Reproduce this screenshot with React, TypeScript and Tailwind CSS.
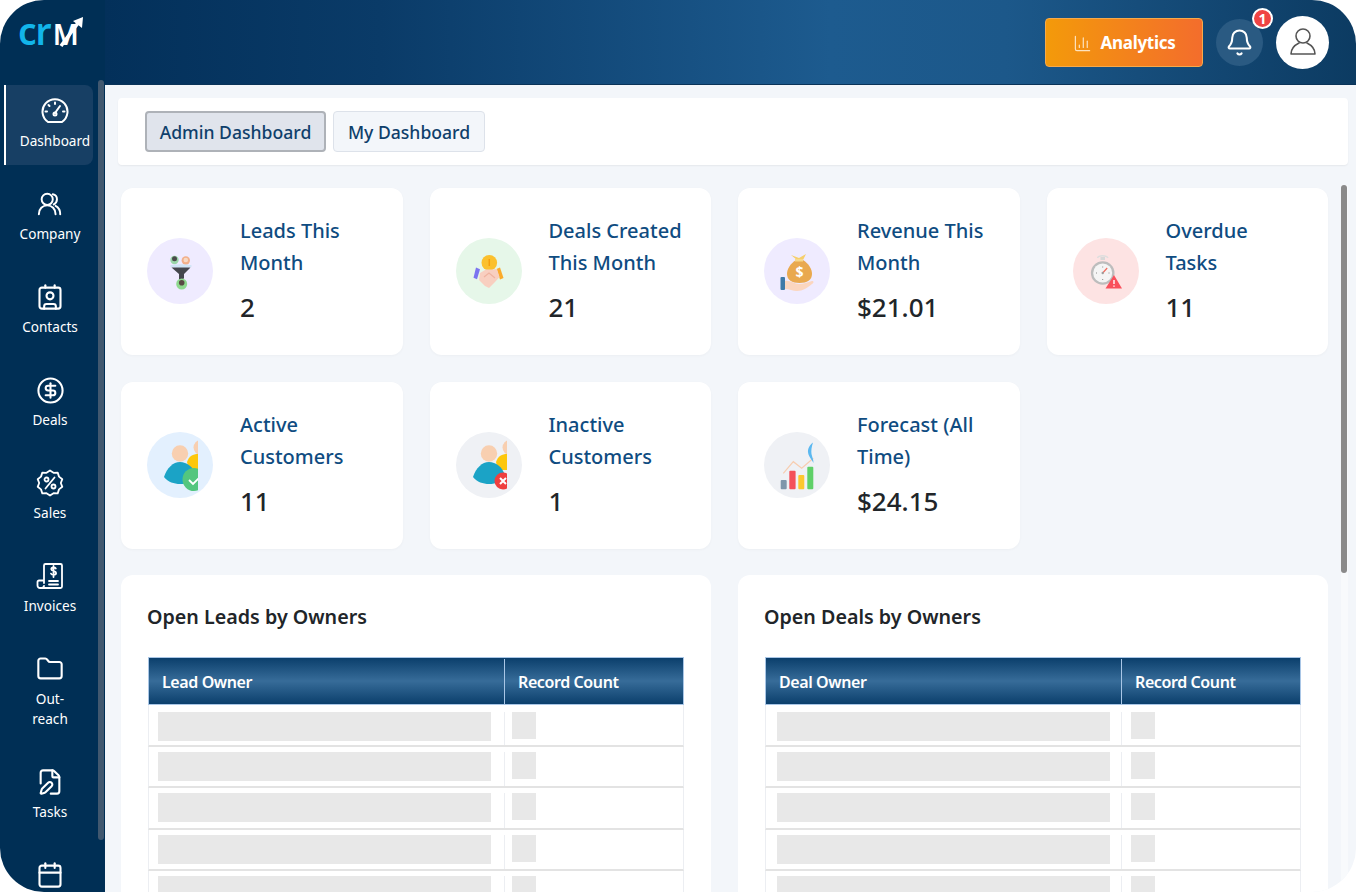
import React from "react";
import { Bell, Calendar, ChartColumn, CircleDollarSign, Contact, FilePen, Folder } from "lucide-react";

const GaugeIcon = () => (
  <svg width="28" height="28" viewBox="0 0 28 28" fill="none" stroke="white" strokeWidth="2" strokeLinecap="round" strokeLinejoin="round">
    <path d="M7 25 A12.500 12.500 0 1 1 21 25 Z" />
    <path d="M14 16 L19 9" />
    <circle cx="14" cy="17" r="1.500" />
    <path d="M14 5.500v1.500M7.500 8l1 1M4.500 14.500h1.500M22 14.500h1.500" />
  </svg>
);

const CompanyIcon = () => (
  <svg width="26" height="26" viewBox="0 0 28 28" fill="none" stroke="white" strokeWidth="2.100" strokeLinecap="round" strokeLinejoin="round">
    <circle cx="11" cy="9" r="6" />
    <path d="M2 25c0-6 4-9.500 9-9.500s9 3.500 9 9.500" />
    <path d="M17 3.500c3 .5 4.500 3 4.500 5.500s-1.500 4.500-3.500 5.500" />
    <path d="M20 16c3 1.500 5 4.500 5 9" />
  </svg>
);

const SalesIcon = () => (
  <svg width="28" height="28" viewBox="0 0 28 28" fill="none" stroke="white" strokeWidth="1.800" strokeLinecap="round" strokeLinejoin="round">
    <path d="M14 1.500l3.500 2.300 4.200-.2 1.300 4 3.300 2.600L24.800 14l1.500 3.800-3.300 2.600-1.300 4-4.200-.2-3.500 2.300-3.500-2.300-4.200.2-1.300-4-3.300-2.600L3.200 14l-1.500-3.800L5 7.600l1.300-4 4.200.2z" />
    <path d="M18.500 8.500l-9 11" />
    <circle cx="10.500" cy="10.500" r="2" />
    <circle cx="17.500" cy="17.500" r="2" />
  </svg>
);

const InvoiceIcon = () => (
  <svg width="28" height="28" viewBox="0 0 28 28" fill="none" stroke="white" strokeWidth="1.800" strokeLinecap="round" strokeLinejoin="round">
    <path d="M8 21V3.500A1.500 1.500 0 0 1 9.500 2h15A1.500 1.500 0 0 1 26 3.500v21a1.500 1.500 0 0 1-1.500 1.500H4a2.500 2.500 0 0 1-2.500-2.500V20a1.500 1.500 0 0 1 1.500-1.500h5" />
    <path d="M8 24a2.500 2.500 0 0 1-2.500 2" />
    <path d="M13 19h9M13 22.500h9" />
    <path d="M19.800 6.500c-.5-.8-1.200-1-2.300-1-1.200 0-2.200.6-2.200 1.800 0 2.400 4.800 1.200 4.800 3.700 0 1.300-1.200 1.900-2.500 1.900-1.200 0-2.100-.4-2.600-1.300M17.500 4v11" />
  </svg>
);

const items = [
  { id: "dashboard", label: "Dashboard", icon: <GaugeIcon />, active: true },
  { id: "company", label: "Company", icon: <CompanyIcon /> },
  { id: "contacts", label: "Contacts", icon: <Contact size={28} strokeWidth={1.8} /> },
  { id: "deals", label: "Deals", icon: <CircleDollarSign size={29} strokeWidth={1.7} /> },
  { id: "sales", label: "Sales", icon: <SalesIcon /> },
  { id: "invoices", label: "Invoices", icon: <InvoiceIcon /> },
  { id: "outreach", label: "Out-\nreach", icon: <Folder size={28} strokeWidth={1.8} />, tall: true },
  { id: "tasks", label: "Tasks", icon: <FilePen size={28} strokeWidth={1.8} /> },
  { id: "calendar", label: "", icon: <Calendar size={28} strokeWidth={1.8} /> },
];

const FunnelArt = () => (
  <svg viewBox="0 0 66 66" className="h-full w-full">
    <circle cx="27.500" cy="22" r="4.200" fill="#9ad6a8" />
    <circle cx="27.500" cy="20.800" r="2.500" fill="#4a4a4a" />
    <circle cx="38.800" cy="22.500" r="4.200" fill="#f2b08a" />
    <circle cx="38.800" cy="22" r="2.300" fill="#f7d9c4" />
    <ellipse cx="34" cy="28" rx="11" ry="1.800" fill="#cfe5f5" />
    <path d="M24.500 29.500h19l-6.500 6.500v4.500l-5 1.500v-6z" fill="#44474d" />
    <circle cx="34.700" cy="46" r="5.500" fill="#8fd98f" />
    <circle cx="34.700" cy="44.800" r="2.800" fill="#5a4a44" />
  </svg>
);

const HandshakeArt = () => (
  <svg viewBox="0 0 66 66" className="h-full w-full">
    <circle cx="33.300" cy="24.700" r="7.800" fill="#fbc02d" />
    <path d="M33.300 21v7" stroke="#f59e0b" strokeWidth="1.500" />
    <path d="M20 29.500l4 1.800-3 10-3.500-1.600z" fill="#7c74f0" />
    <path d="M44 29.500l-3.500 1.500 3.500 10.500 3.500-1.500z" fill="#fbab2b" />
    <path d="M24 35l6-3.500h6l5-.5 2.500 8-4.500 5-6 6-4-2-6-6z" fill="#f8cfc0" />
    <path d="M28 39l5-4 6 5" stroke="#efb3a0" strokeWidth="1.200" fill="none" />
  </svg>
);

const BagArt = () => (
  <svg viewBox="0 0 66 66" className="h-full w-full">
    <path d="M27 17l8 3 7-4-3 6h-6z" fill="#f6cf6b" />
    <path d="M32 22h7c6 4 9 9 9 14 0 6-5 9-12.500 9S23 42 23 36c0-5 3-10 9-14z" fill="#e9a94f" />
    <path d="M31 21h8v2.500h-8z" fill="#f7d98b" />
    <text x="35.500" y="39" textAnchor="middle" fontSize="14" fontWeight="700" fill="#fff" fontFamily="Noto Sans, sans-serif">$</text>
    <path d="M21 43c5-1 9 3 14 3 4 0 9-2 13-3 2 0 2 2 0 3-5 4-9 7-15 7-4 0-8-2-12-2z" fill="#fbd6bf" />
    <rect x="16.500" y="39" width="4.500" height="13" rx="1" fill="#3f7aa8" />
  </svg>
);

const WatchArt = () => (
  <svg viewBox="0 0 66 66" className="h-full w-full">
    <rect x="27.500" y="19" width="4.500" height="3" fill="#d8d8d8" />
    <path d="M24.500 20c1-3 9-3 10.500 0" fill="none" stroke="#dedede" strokeWidth="1.500" />
    <circle cx="29.700" cy="35" r="11.800" fill="#bdbdbd" />
    <circle cx="29.700" cy="35" r="9.500" fill="#f5f5f5" />
    <path d="M29.700 35l4.500-5" stroke="#f26a5c" strokeWidth="1.200" />
    <circle cx="29.700" cy="35" r="1.200" fill="#9e9e9e" />
    <path d="M23 35h1M35.500 35h1M29.700 28.500v1M29.700 41v1" stroke="#8d8d8d" strokeWidth="1" />
    <path d="M41 37l8 13.500H32.500z" fill="#f9505c" />
    <path d="M41 42v4M41 47.500v1.200" stroke="#fff" strokeWidth="1.400" />
  </svg>
);

const PeopleArt = ({ badge }: { badge: "ok" | "no" }) => (
  <svg viewBox="0 0 66 66" className="h-full w-full">
    <defs>
      <clipPath id={`clip-${badge}`}>
        <rect x="0" y="0" width="51" height="66" />
      </clipPath>
    </defs>
    <g clipPath={`url(#clip-${badge})`}>
      <circle cx="54" cy="15.500" r="7.500" fill="#f8cfb0" />
      <path d="M40 30c2-6 6-8 11-8h6v16H42z" fill="#fdc70c" />
      <circle cx="33" cy="21.500" r="8.200" fill="#f8cfb0" />
      <path d="M17 45c3-9 9-15 16-15s13 5 16 13c-3 7-9 9-16 9-6 0-12-2-16-7z" fill="#1ba3c6" />
      {badge === "ok" ? (
        <>
          <circle cx="47" cy="47.500" r="11.500" fill="#53c67f" />
          <path d="M42 48l4 4 6-6" stroke="#fff" strokeWidth="1.800" fill="none" />
        </>
      ) : (
        <>
          <circle cx="47" cy="49" r="8.500" fill="#ef3f3f" />
          <path d="M44 46l6 6M50 46l-6 6" stroke="#fff" strokeWidth="2" />
        </>
      )}
    </g>
  </svg>
);

const ChartArt = () => (
  <svg viewBox="0 0 66 66" className="h-full w-full">
    <path d="M19.300 41.300l10-11.600 8.400 6.600 11.600-10" stroke="#f7cdb0" strokeWidth="1.200" fill="none" />
    <rect x="16.700" y="48" width="6" height="9.300" rx="1" fill="#7f97ab" />
    <rect x="25.300" y="38.700" width="6.300" height="18.600" rx="1" fill="#f4505a" />
    <rect x="34.300" y="43" width="6" height="14.300" rx="1" fill="#fdc82f" />
    <rect x="43.300" y="34.700" width="6" height="22.600" rx="1" fill="#5fd068" />
    <path d="M49 10.500c-4.500 3.500-6 7.500-4.500 12 1 3 3 5 5 8.500 0-4-1.500-6-2-9s0-7 1.500-11.500z" fill="#5bb8f0" />
  </svg>
);

const cards = [
  { lines: ["Leads This", "Month"], value: "2", bg: "bg-[#efebff]", art: <FunnelArt /> },
  { lines: ["Deals Created", "This Month"], value: "21", bg: "bg-[#e6f7e9]", art: <HandshakeArt /> },
  { lines: ["Revenue This", "Month"], value: "$21.01", bg: "bg-[#efebff]", art: <BagArt /> },
  { lines: ["Overdue", "Tasks"], value: "11", bg: "bg-[#fde3e3]", art: <WatchArt /> },
  { lines: ["Active", "Customers"], value: "11", bg: "bg-[#e3f0fe]", art: <PeopleArt badge="ok" /> },
  { lines: ["Inactive", "Customers"], value: "1", bg: "bg-[#eff1f5]", art: <PeopleArt badge="no" /> },
  { lines: ["Forecast (All", "Time)"], value: "$24.15", bg: "bg-[#eff1f5]", art: <ChartArt /> },
];

const OwnerTable = ({ title, owner, right }: { title: string; owner: string; right?: boolean }) => (
  <div className="h-[360px] rounded-xl bg-white px-[27px] pt-[28px]">
    <h2 className="-ml-px text-[19.700px] leading-7 font-semibold text-[#212529]">{title}</h2>
    <div className="mt-[26px]">
      <div className="flex h-[48px] items-center border border-[#a9c6e6] bg-[linear-gradient(180deg,#0b3f6c_0%,#376c99_50%,#0b3f6c_100%)] pt-px text-[16px] font-semibold tracking-[-0.400px] text-white">
        <div className="flex h-full w-[356px] items-center border-r border-[#a9c6e6] pl-[13px]">{owner}</div>
        <div className="pl-[13px]">Record Count</div>
      </div>
      {[0, 1, 2, 3, 4].map((row) => (
        <div
          key={row}
          className={`flex h-[41.500px] border-x border-b-2 border-x-[#eceef2] border-b-[#e3e3e3] ${row === 0 ? "pt-[7px]" : "pt-[5px]"}`}
        >
          <div className={`h-full w-[356px] shrink-0 border-r border-[#eceef2] ${right ? "pl-[11px]" : "pl-[9px]"}`}>
            <div className="h-[29px] w-[333px] bg-[#e8e8e8]" />
          </div>
          <div className={right ? "pl-[9px]" : "pl-[7px]"}>
            <div className="h-[27px] w-[24px] bg-[#e8e8e8]" />
          </div>
        </div>
      ))}
    </div>
  </div>
);

export default function App() {
  return (
    <div className="h-[892px] w-[1356px] bg-white font-['Noto_Sans',sans-serif]">
      <div className="relative flex h-full overflow-hidden rounded-[44px]">
        <aside className="w-[105px] shrink-0 overflow-hidden bg-[#002f55]">
          <div className="flex h-[85px] items-start pt-[9px] pl-[18px]">
            <div className="relative flex h-[44px] items-baseline font-semibold">
              <span className="text-[37px] leading-[44px] tracking-[-1px] text-[#12b5ea]">cr</span>
              <span className="ml-[2px] text-[28px] leading-[44px] tracking-[-1px] text-white">M</span>
              <svg className="absolute top-[5px] left-[38px]" width="30" height="34" viewBox="0 0 30 34" fill="none">
                <path d="M5 32 L22 9" stroke="white" strokeWidth="3.500" />
                <path d="M17 7 L27 3 L26 14 Z" fill="white" />
              </svg>
            </div>
          </div>
          <nav className="flex flex-col gap-[13px]">
            {items.map((item) => (
              <div
                key={item.id}
                className={`flex shrink-0 flex-col items-center pt-[12px] text-white ${item.tall ? "h-[100px]" : "h-[80px]"} ${
                  item.active
                    ? "ml-[4px] w-[89px] rounded-r-lg border-l-2 border-white bg-[#173f64] pl-[11px]"
                    : "ml-[4px] w-[92px]"
                }`}
              >
                <div className="flex h-[28px] items-center">{item.icon}</div>
                {item.label && (
                  <div className="mt-[6px] text-center text-[13.600px] leading-[20px] whitespace-pre-line">{item.label}</div>
                )}
              </div>
            ))}
          </nav>
        </aside>

        <div className="flex min-w-0 flex-1 flex-col">
          <header className="flex h-[85px] shrink-0 items-center justify-end border-b border-[#0a3358] bg-[linear-gradient(90deg,#03305a_0%,#0a3b68_22%,#1d5b8f_58%,#1c588a_72%,#0c3b62_100%)] pr-[27px]">
            <button className="flex h-[49px] w-[158px] items-center justify-center gap-[9px] rounded border border-[#f7a94a] bg-[linear-gradient(90deg,#f39a0a,#f36d2c)] pt-[2px] text-[17px] font-bold tracking-[-0.300px] text-white">
              <ChartColumn size={19} strokeWidth={1.500} className="text-[#fde3c0]" />
              Analytics
            </button>
            <div className="relative ml-[13px] flex h-[47px] w-[47px] items-center justify-center rounded-full bg-[#2a5a82]">
              <Bell size={29} strokeWidth={1.700} className="text-white" />
              <span className="absolute -top-[11px] -right-[10px] flex h-[21px] w-[21px] items-center justify-center rounded-full border-2 border-white bg-[#ef4444] text-[14px] font-bold text-white">
                1
              </span>
            </div>
            <div className="ml-[13px] flex h-[53px] w-[53px] items-center justify-center rounded-full bg-white">
              <svg width="28" height="30" viewBox="0 0 28 30" fill="none" stroke="#555" strokeWidth="1.600">
                <circle cx="14" cy="9" r="7" />
                <path d="M2 27c0-7 6-10 8-11M26 27c0-7-6-10-8-11M2 27h24" strokeLinecap="round" />
              </svg>
            </div>
          </header>

          <main className="flex-1 overflow-hidden bg-[#f3f6fa] pt-[13px] pl-[13px]">
            <div className="mr-[8px] flex h-[67px] items-center gap-[7px] rounded-sm bg-white pl-[27px] shadow-[0_1px_2px_rgba(0,0,0,0.06)]">
              <button className="h-[41px] w-[181px] rounded border-2 border-[#aeb2b8] bg-[#e0e4ec] pt-px text-[17.600px] font-medium text-[#0f3f6b]">
                Admin Dashboard
              </button>
              <button className="h-[41px] w-[152px] rounded border border-[#dde2ea] bg-[#f3f6fa] pt-px text-[17.600px] font-medium text-[#0f3f6b]">
                My Dashboard
              </button>
            </div>

            <div className="mt-[23px] ml-[3px] grid w-[1207px] grid-cols-4 gap-x-[27px] gap-y-[27px]">
              {cards.map((card) => (
                <div key={card.lines[0]} className="flex h-[167px] items-center gap-[27px] rounded-xl bg-white pl-[26px] shadow-[0_1px_3px_rgba(0,0,0,0.03)]">
                  <div className={`-mt-px h-[66px] w-[66px] shrink-0 rounded-full ${card.bg}`}>{card.art}</div>
                  <div className="-mt-[1px]">
                    <div className="text-[20px] leading-[32px] font-medium text-[#0f4c81]">
                      {card.lines[0]}
                      <br />
                      {card.lines[1]}
                    </div>
                    <div className="mt-[8px] text-[26px] leading-[40px] font-medium text-[#212529]">{card.value}</div>
                  </div>
                </div>
              ))}
            </div>

            <div className="mt-[26px] ml-[3px] grid w-[1207px] grid-cols-2 gap-x-[27px]">
              <OwnerTable title="Open Leads by Owners" owner="Lead Owner" />
              <OwnerTable title="Open Deals by Owners" owner="Deal Owner" right />
            </div>
          </main>
        </div>

        <div className="absolute top-[80px] left-[98px] h-[760px] w-[6px] rounded-full bg-[#41586f]" />
        <div className="absolute top-[185px] right-[8px] bottom-0 w-[7px] bg-[#f8fafc]" />
        <div className="absolute top-[185px] right-[9px] h-[388px] w-[6px] rounded-full bg-[#8a8a8a]" />
      </div>
    </div>
  );
}
